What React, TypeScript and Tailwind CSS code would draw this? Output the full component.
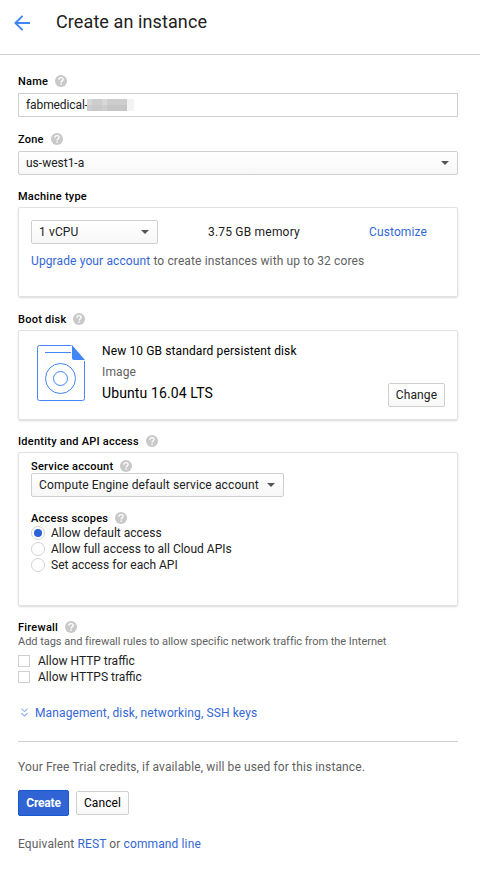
import React from "react";

function Help() {
  return (
    <svg width="12" height="12" viewBox="0 0 12 12" className="shrink-0">
      <circle cx="6" cy="6" r="6" fill="#c9c9c9" />
      <path d="M3.9 4.7C3.9 3.3 4.8 2.6 6 2.6s2.1.8 2.1 1.9C8.1 5.9 6.1 5.9 6.1 7.5" fill="none" stroke="#fff" strokeWidth="1.35" />
      <rect x="5.4" y="8.4" width="1.4" height="1.4" fill="#fff" />
    </svg>
  );
}

function Label({ text, help = true }: { text: string; help?: boolean }) {
  return (
    <div className="flex h-3.5 items-center gap-[7px] text-[11px] leading-[14px] font-medium tracking-[0.24px] text-black">
      <span className="mt-0.5">{text}</span>
      {help && <Help />}
    </div>
  );
}

function Select({ value, className }: { value: string; className: string }) {
  return (
    <div className={`flex h-6 items-center justify-between rounded-[2px] border border-[#cfcfcf] bg-linear-to-b from-white to-[#f7f7f7] pr-2 pl-[7px] ${className}`}>
      <span>{value}</span>
      <svg width="8" height="4" viewBox="0 0 8 4">
        <path d="M0 0h8L4 4z" fill="#555" />
      </svg>
    </div>
  );
}

function Card({ className, children }: { className: string; children: React.ReactNode }) {
  return (
    <div className={`rounded-[2px] border border-[#e2e2e2] shadow-[0_1px_2px_rgba(0,0,0,0.15)] ${className}`}>{children}</div>
  );
}

function Button({ text, className }: { text: string; className: string }) {
  return (
    <button className={`flex h-6 items-center justify-center rounded-[2px] border border-[#cfcfcf] bg-linear-to-b from-white to-[#f8f8f8] ${className}`}>
      {text}
    </button>
  );
}

function Radio({ text, checked }: { text: string; checked?: boolean }) {
  return (
    <div className="flex h-4 items-center gap-1.5 tracking-normal">
      <span className="flex size-3.5 items-center justify-center rounded-full border border-[#d2d2d2]">
        {checked && <span className="size-2 rounded-full bg-[#2962d9]" />}
      </span>
      <span>{text}</span>
    </div>
  );
}

function Checkbox({ text }: { text: string }) {
  return (
    <div className="flex h-4 items-center gap-2 tracking-normal">
      <span className="size-3 border border-[#cfcfcf]" />
      <span>{text}</span>
    </div>
  );
}

function DiskIcon() {
  return (
    <svg width="48" height="56" viewBox="0 0 48 56" fill="none" stroke="#4285f4">
      <path d="M34.5 .5H2.5a2 2 0 0 0-2 2v51a2 2 0 0 0 2 2h43a2 2 0 0 0 2-2V16" />
      <path d="M8 7.5h26" />
      <path d="M35 0v13a2 2 0 0 0 2 2h11z" fill="#4285f4" stroke="none" />
      <circle cx="23.5" cy="33.5" r="15" />
      <circle cx="23.5" cy="33.5" r="7" />
    </svg>
  );
}

export default function App() {
  return (
    <div className="h-[883px] w-[480px] bg-white font-['Roboto',sans-serif] text-[12px] leading-4 tracking-[0.12px] text-[#212121]">
      <header className="flex h-[55px] border-b border-[#cfcfcf] pl-3.5">
        <svg width="16" height="16" viewBox="0 0 16 16" fill="none" stroke="#4285f4" strokeWidth="1.9" className="mt-[15px]">
          <path d="M16 8H1.4M8.6 .8 1.4 8l7.2 7.2" />
        </svg>
        <h1 className="mt-[10px] ml-[26px] text-[18px] leading-6 tracking-[0.1px]">Create an instance</h1>
      </header>

      <main className="w-[458px] pt-[19px] pl-[18px]">
        <Label text="Name" />
        <div className="mt-[5px] flex h-6 items-center border border-[#cfcfcf] pl-[7px]">
          <span className="w-[61px] tracking-[-0.1px] whitespace-nowrap">fabmedical-</span>
          <svg width="48" height="16" viewBox="0 0 48 16" className="mt-[-2px]">
            <path d="M0 3h40v12H0z" fill="#cdcdcd" />
            <path d="M0 3h5v6H0zM15 3h5v6h-5z" fill="#d8d8d8" />
            <path d="M20 9h20v6H20z" fill="#c6c6c6" />
            <path d="M5 9h10v6H5z" fill="#c9c9c9" />
            <path d="M40 3h7v12h-7z" fill="#f3f3f3" />
          </svg>
        </div>

        <div className="mt-[15px]"><Label text="Zone" /></div>
        <Select value="us-west1-a" className="mt-[5px] tracking-normal" />

        <div className="mt-3.5"><Label text="Machine type" help={false} /></div>
        <Card className="mt-1 h-[90px] px-3 pt-3">
          <div className="flex h-6 items-center">
            <Select value="1 vCPU" className="w-[127px]" />
            <span className="ml-[50px] tracking-[0.2px]">3.75 GB memory</span>
            <a className="mr-[18px] ml-auto text-[#3367d6]">Customize</a>
          </div>
          <p className="mt-[9px] text-[#616161]"><a className="text-[#3367d6]">Upgrade your account</a> to create instances with up to 32 cores</p>
        </Card>

        <div className="mt-[15px]"><Label text="Boot disk" /></div>
        <Card className="mt-1 flex h-[90px] pr-3 pl-[18px]">
          <div className="mt-3.5"><DiskIcon /></div>
          <div className="mt-3 ml-[17px] text-black">
            <p>New 10 GB standard persistent disk</p>
            <p className="mt-[5px] text-[#616161]">Image</p>
            <p className="mt-[5px] text-[14px]">Ubuntu 16.04 LTS</p>
          </div>
          <Button text="Change" className="mt-[52px] ml-auto w-[57px]" />
        </Card>

        <div className="mt-3.5"><Label text="Identity and API access" /></div>
        <Card className="mt-1 h-[154px] px-3 pt-1.5">
          <Label text="Service account" />
          <Select value="Compute Engine default service account" className="w-[253px]" />
          <div className="mt-3.5"><Label text="Access scopes" /></div>
          <Radio text="Allow default access" checked />
          <Radio text="Allow full access to all Cloud APIs" />
          <Radio text="Set access for each API" />
        </Card>

        <div className="mt-3.5"><Label text="Firewall" /></div>
        <p className="mt-px text-[11px] leading-[14px] tracking-[-0.03px] text-[#616161]">Add tags and firewall rules to allow specific network traffic from the Internet</p>
        <div className="mt-1">
          <Checkbox text="Allow HTTP traffic" />
          <Checkbox text="Allow HTTPS traffic" />
        </div>

        <a className="mt-5 flex h-4 items-center text-[#3367d6]">
          <svg width="7" height="9" viewBox="0 0 7 9" fill="none" stroke="#8fb0ee" strokeWidth="1.1" className="mt-[-2px] mr-[7px] ml-[3px]">
            <path d="M.4 .6l3.1 3L6.6 .6M.4 5l3.1 3L6.6 5" />
          </svg>
          Management, disk, networking, SSH keys
        </a>

        <hr className="mt-5 border-[#cfcfcf]" />
        <p className="mt-[17px] text-[#616161]">Your Free Trial credits, if available, will be used for this instance.</p>
        <div className="mt-[15px] flex items-center gap-[7px]">
          <button className="flex h-[26px] w-[51px] items-center justify-center rounded-[2px] border border-[#1a56cc] bg-[#3063d3] font-bold tracking-[-0.2px] text-white">Create</button>
          <Button text="Cancel" className="w-[53px] text-black" />
        </div>
        <p className="mt-5 text-[#616161]">Equivalent <a className="text-[#3367d6]">REST</a> or <a className="text-[#3367d6]">command line</a></p>
      </main>
    </div>
  );
}
